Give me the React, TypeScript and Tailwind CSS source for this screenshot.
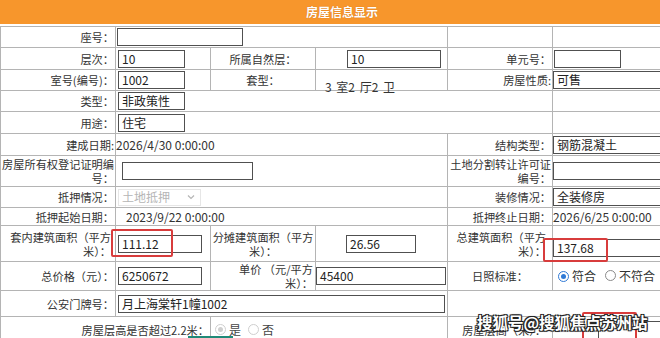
import React from "react";

const td = "border border-[#b4b4b4] p-0 text-[11.2px] leading-[14px] text-[#333] overflow-visible";
const lr = "border border-[#b4b4b4] p-0 pr-[1px] text-right text-[11.2px] leading-[14px] text-[#333]";
const lc = "border border-[#b4b4b4] p-0 text-center text-[11.2px] leading-[14px] text-[#333]";

function Inp({ v = "", w, cls = "" }: { v?: string; w: string; cls?: string }) {
  return (
    <div
      className={`h-[18px] border border-[#505050] bg-white px-[3px] text-[12px] leading-[16px] text-[#222] whitespace-nowrap overflow-hidden ${w} ${cls}`}
    >
      {v}
    </div>
  );
}

function Radio({ on, disabled }: { on?: boolean; disabled?: boolean }) {
  const ring = disabled ? "border-[#cfcfcf]" : on ? "border-[#2f7ad6]" : "border-[#8a8a8a]";
  const dot = disabled ? "bg-[#cfcfcf]" : "bg-[#2f7ad6]";
  return (
    <span className={`inline-flex h-[11px] w-[11px] items-center justify-center rounded-full border ${ring} bg-white`}>
      {on && <span className={`h-[5px] w-[5px] rounded-full ${dot}`} />}
    </span>
  );
}

export default function App() {
  return (
    <div className="relative h-[338px] w-[660px] overflow-hidden bg-white font-['Noto_Sans_CJK_SC','Microsoft_YaHei',sans-serif]">
      <div className="flex h-[24px] items-center justify-center bg-[#f7962c] pl-[24px] text-[12px] font-bold text-white [text-shadow:0_0_1px_#c86a10]">
        房屋信息显示
      </div>
      <div className="h-[2px] bg-white" />
      <table className="w-[660px] table-fixed border-collapse">
        <colgroup>
          <col className="w-[115px]" />
          <col className="w-[95px]" />
          <col className="w-[105px]" />
          <col className="w-[132px]" />
          <col className="w-[105px]" />
          <col className="w-[108px]" />
        </colgroup>
        <tbody>
          <tr className="h-[21px]">
            <td className={lr}>座号：</td>
            <td className={td} colSpan={3}>
              <Inp w="w-[126px]" cls="ml-px" />
            </td>
            <td className={td}></td>
            <td className={td}></td>
          </tr>
          <tr className="h-[22px]">
            <td className={lr}>层次：</td>
            <td className={td}>
              <Inp v="10" w="w-[67px]" cls="ml-[2px]" />
            </td>
            <td className={lc}>所属自然层：</td>
            <td className={td}>
              <Inp v="10" w="w-[94px]" cls="ml-[31px]" />
            </td>
            <td className={lr}>单元号：</td>
            <td className={td}>
              <Inp w="w-[67px]" cls="ml-px" />
            </td>
          </tr>
          <tr className="h-[21px]">
            <td className={lr}>室号(编号)：</td>
            <td className={td}>
              <Inp v="1002" w="w-[67px]" cls="ml-[2px]" />
            </td>
            <td className={lc}>套型：</td>
            <td className={`${td} align-bottom`}>
              <span className="relative top-[4px] pl-[9px] text-[12px] whitespace-pre [word-spacing:2px]">3 室2 厅2 卫</span>
            </td>
            <td className={lr}>房屋性质:</td>
            <td className={td}>
              <Inp v="可售" w="w-[120px]" />
            </td>
          </tr>
          <tr className="h-[21px]">
            <td className={lr}>类型：</td>
            <td className={td} colSpan={4}>
              <Inp v="非政策性" w="w-[67px]" cls="ml-[2px]" />
            </td>
            <td className={td}></td>
          </tr>
          <tr className="h-[22px]">
            <td className={lr}>用途：</td>
            <td className={td} colSpan={4}>
              <Inp v="住宅" w="w-[67px]" cls="ml-[2px]" />
            </td>
            <td className={td}></td>
          </tr>
          <tr className="h-[22px]">
            <td className={lr}>建成日期:</td>
            <td className={`${td} text-[12px] whitespace-nowrap`} colSpan={3}>
              2026/4/30 0:00:00
            </td>
            <td className={lr}>结构类型：</td>
            <td className={td}>
              <Inp v="钢筋混凝土" w="w-[120px]" />
            </td>
          </tr>
          <tr className="h-[31px]">
            <td className={lr}>房屋所有权登记证明编号：</td>
            <td className={td} colSpan={3}>
              <Inp w="w-[131px]" cls="ml-[6px]" />
            </td>
            <td className={lr}>土地分割转让许可证编号：</td>
            <td className={td}>
              <Inp w="w-[120px]" />
            </td>
          </tr>
          <tr className="h-[21px]">
            <td className={lr}>抵押情况：</td>
            <td className={td} colSpan={3}>
              <div className="ml-[2px] flex h-[17px] w-[83px] items-center justify-between border border-[#e6e6e6] px-[3px] text-[12px] text-[#b5b5b5]">
                <span>土地抵押</span>
                <svg width="8" height="6" viewBox="0 0 8 6" className="mr-[2px]">
                  <path d="M1 1.5 L4 4.5 L7 1.5" fill="none" stroke="#b5b5b5" strokeWidth="1.2" />
                </svg>
              </div>
            </td>
            <td className={lr}>装修情况：</td>
            <td className={td}>
              <Inp v="全装修房" w="w-[120px]" />
            </td>
          </tr>
          <tr className="h-[18px]">
            <td className={lr}>抵押起始日期：</td>
            <td className={`${td} pl-[10px] text-[12px] whitespace-nowrap`} colSpan={3}>
              2023/9/22 0:00:00
            </td>
            <td className={lr}>抵押终止日期：</td>
            <td className={`${td} text-[12px] whitespace-nowrap`}>2026/6/25 0:00:00</td>
          </tr>
          <tr className="h-[36px]">
            <td className={`${lr} pr-[4px]`}>套内建筑面积（平方米）：</td>
            <td className={td}>
              <Inp v="111.12" w="w-[84px]" cls="ml-[2px]" />
            </td>
            <td className={lc}>分摊建筑面积（平方米）：</td>
            <td className={td}>
              <Inp v="26.56" w="w-[70px]" cls="ml-[30px]" />
            </td>
            <td className={`${lr} pr-[6px]`}>总建筑面积（平方米）：</td>
            <td className={td}>
              <Inp v="137.68" w="w-[120px]" cls="mt-[8px]" />
            </td>
          </tr>
          <tr className="h-[26px]">
            <td className={lr}>总价格（元）：</td>
            <td className={td}>
              <Inp v="6250672" w="w-[84px]" cls="ml-[2px]" />
            </td>
            <td className={`${lr} pr-[2px]`}>
              单价 （元/平方
              <br />
              米）：
            </td>
            <td className={td}>
              <Inp v="45400" w="w-[130px]" />
            </td>
            <td className={lc}>日照标准：</td>
            <td className={td}>
              <div className="flex items-center pl-[5px] text-[12px] whitespace-nowrap">
                <Radio on />
                <span className="ml-[3px]">符合</span>
                <span className="ml-[9px]">
                  <Radio />
                </span>
                <span className="ml-[3px]">不符合</span>
              </div>
            </td>
          </tr>
          <tr className="h-[26px]">
            <td className={lr}>公安门牌号：</td>
            <td className={td} colSpan={3}>
              <Inp v="月上海棠轩1幢1002" w="w-[327px]" cls="ml-[2px]" />
            </td>
            <td className={td} colSpan={2}></td>
          </tr>
          <tr className="h-[26px]">
            <td className={lr} colSpan={2}>房屋层高是否超过2.2米：</td>
            <td className={td} colSpan={2}>
              <div className="flex items-center pl-[4px] text-[12px] text-[#444]">
                <Radio on disabled />
                <span className="ml-[3px]">是</span>
                <span className="ml-[7px]">
                  <Radio disabled />
                </span>
                <span className="ml-[3px]">否</span>
              </div>
            </td>
            <td className={`${lr} pr-[6px]`}>房屋层高（米）：</td>
            <td className={td}>
              <Inp w="w-[80px]" cls="ml-[45px]" />
            </td>
          </tr>
        </tbody>
      </table>

      <div className="absolute left-[188px] top-[336px] h-[4px] w-[45px] bg-[#1f8a78]" />

      <div className="absolute left-[111px] top-[229px] h-[28px] w-[62px] rounded-[2px] border-2 border-[#d83c3c]" />
      <div className="absolute left-[543px] top-[238px] h-[24px] w-[65px] rounded-[2px] border-2 border-[#d83c3c]" />
      <div className="absolute left-[582px] top-[312px] h-[30px] w-[55px] rounded-[2px] border-2 border-[#d83c3c]" />

      <div className="absolute left-[477px] top-[311px] whitespace-nowrap text-[15.5px] font-bold leading-[22px] text-white [text-shadow:-1px_-1px_0_#222,1px_-1px_0_#222,-1px_1px_0_#222,1px_1px_0_#222,0_0_2px_#000]">
        搜狐号@搜狐焦点苏州站
      </div>
    </div>
  );
}
